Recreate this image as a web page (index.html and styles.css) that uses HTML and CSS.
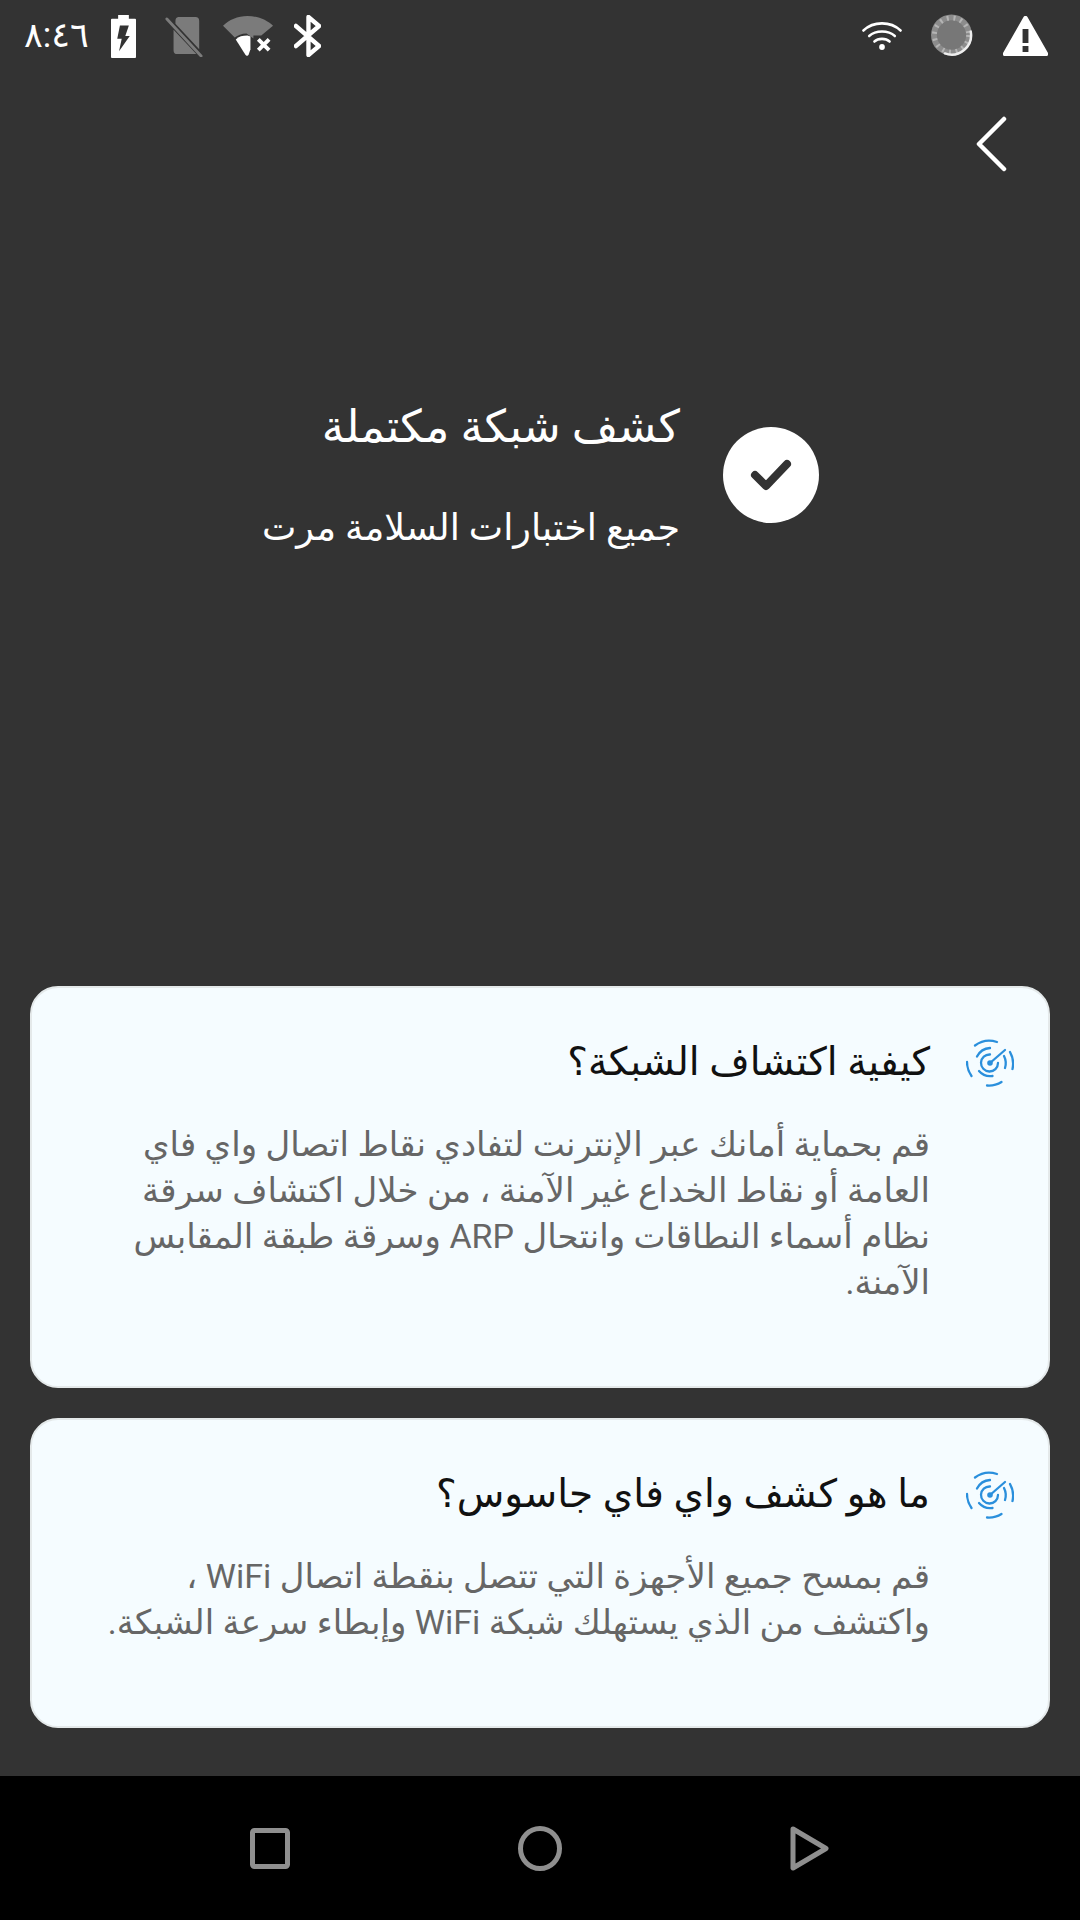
FILE: index.html
```html
<!DOCTYPE html>
<html lang="ar">
<head>
<meta charset="utf-8">
<title>كشف شبكة</title>
<link rel="stylesheet" href="styles.css">
</head>
<body>
<svg width="0" height="0" class="defs">
  <symbol id="radar" viewBox="0 0 48 48">
    <g fill="none" stroke="#2a8fdc" stroke-width="2.300" stroke-linecap="round">
      <path d="M9 6.500 A24 24 0 0 1 31 3"/>
      <path d="M44 13 A24 24 0 0 1 46.500 30"/>
      <path d="M35.500 43 A24 24 0 0 1 21 46.500"/>
      <path d="M5.500 37 A24 24 0 0 1 1 23"/>
      <path d="M11 17.500 A16 16 0 0 1 24 9"/>
      <path d="M38 17 A16 16 0 0 1 39 29"/>
      <path d="M26.500 37 A15 15 0 0 1 13 32"/>
      <path d="M32 24 A8.500 8.500 0 1 1 24 15.500"/>
      <path d="M24 24 L39 11"/>
    </g>
    <circle cx="24" cy="24" r="2.800" fill="#2a8fdc"/>
  </symbol>
</svg>

<div class="screen">
  <div class="statusbar">
    <div class="status-group">
      <span class="clock">٨:٤٦</span>
      <svg class="ic-battery" width="25" height="44" viewBox="0 0 28 46" preserveAspectRatio="none">
        <path fill="#fff" d="M8 1h12v4h7a1 1 0 0 1 1 1v39a1 1 0 0 1-1 1H1a1 1 0 0 1-1-1V6a1 1 0 0 1 1-1h7z"/>
        <path fill="#333" d="M10 12h10l-4 11h5L9 39l3-13H7z"/>
      </svg>
      <svg class="ic-sim" width="38" height="41" viewBox="0 0 40 42" preserveAspectRatio="none">
        <path fill="#7b7b7b" d="M14 1h18a4 4 0 0 1 4 4v29L11 8V5a4 4 0 0 1 3-4zM9 14l24 25H13a4 4 0 0 1-4-4z"/>
        <path stroke="#7b7b7b" stroke-width="3" stroke-linecap="round" d="M2 3l36 38"/>
      </svg>
      <svg class="ic-wifi-off" width="51" height="41" viewBox="0 0 52 42" preserveAspectRatio="none">
        <path fill="#7b7b7b" d="M0 10C6 4 15 0 25 0s20 4 26 10L39 20H31v3L24 18c-5 0-9 2-12 4z"/>
        <path fill="#fff" d="M13 24c3-3 7-4 12-4l3 1v13l-2 6a2 2 0 0 1-3 0z"/>
        <path stroke="#fff" stroke-width="4" d="M36 24l11 11M47 24L36 35"/>
      </svg>
      <svg class="ic-bt" width="27" height="42" viewBox="0 0 28 42" preserveAspectRatio="none">
        <path fill="none" stroke="#fff" stroke-width="4.500" stroke-linecap="round" stroke-linejoin="round" d="M2 11l24 20-11 9V2l11 9L2 31"/>
      </svg>
    </div>
    <div class="status-group status-right">
      <svg class="ic-wifi" width="40" height="30" viewBox="0 0 42 30" preserveAspectRatio="none">
        <g fill="none" stroke="#fff" stroke-width="2.600" stroke-linecap="round">
          <path d="M1.500 9.500C12 0 30 0 40.500 9.500"/>
          <path d="M7.500 15c7-6 20-6 27 0"/>
          <path d="M13 20.500c4-3.500 12-3.500 16 0"/>
        </g>
        <circle cx="21" cy="26" r="3" fill="#fff"/>
      </svg>
      <svg class="ic-spin" width="43" height="44" viewBox="0 0 44 44">
        <circle cx="21" cy="21" r="21" fill="#8c8c8c"/>
        <circle cx="21" cy="21" r="15" fill="#777"/>
        <circle cx="21" cy="21" r="17.500" fill="none" stroke="#b5b5b5" stroke-width="5" stroke-dasharray="2 5"/>
        <path d="M40.700 17.500A20 20 0 0 1 14.200 39.800" fill="none" stroke="#eee" stroke-width="2.500" stroke-linecap="round"/>
      </svg>
      <svg class="ic-warn" width="45" height="40" viewBox="0 0 46 40" preserveAspectRatio="none">
        <path fill="#fff" d="M23 0a2 2 0 0 1 2 1l21 36a2 2 0 0 1-2 3H2a2 2 0 0 1-2-3L21 1a2 2 0 0 1 2-1z"/>
        <path fill="#333" d="M20 13h6v14h-6zM20 30h6v6h-6z"/>
      </svg>
    </div>
  </div>

  <div class="toolbar">
    <svg width="32" height="56" viewBox="0 0 32 56">
      <path fill="none" stroke="#fff" stroke-width="4.500" stroke-linecap="round" stroke-linejoin="round" d="M28 3L3 28l25 25"/>
    </svg>
  </div>

  <div class="hero" dir="rtl">
    <div class="check-circle">
      <svg width="42" height="34" viewBox="0 0 42 34">
        <path fill="none" stroke="#333" stroke-width="8" stroke-linecap="round" stroke-linejoin="round" d="M5 17l11 11L37 6"/>
      </svg>
    </div>
    <div class="hero-text">
      <div class="hero-title">كشف شبكة مكتملة</div>
      <div class="hero-sub">جميع اختبارات السلامة مرت</div>
    </div>
  </div>

  <div class="cards" dir="rtl">
    <div class="card card-tall">
      <svg class="card-icon" width="48" height="48"><use href="#radar"/></svg>
      <div class="card-text">
        <div class="card-title">كيفية اكتشاف الشبكة؟</div>
        <div class="card-body">قم بحماية أمانك عبر الإنترنت لتفادي نقاط اتصال واي فاي العامة أو نقاط الخداع غير الآمنة ، من خلال اكتشاف سرقة نظام أسماء النطاقات وانتحال ARP وسرقة طبقة المقابس الآمنة.</div>
      </div>
    </div>
    <div class="card card-short">
      <svg class="card-icon" width="48" height="48"><use href="#radar"/></svg>
      <div class="card-text">
        <div class="card-title">ما هو كشف واي فاي جاسوس؟</div>
        <div class="card-body">قم بمسح جميع الأجهزة التي تتصل بنقطة اتصال WiFi ، واكتشف من الذي يستهلك شبكة WiFi وإبطاء سرعة الشبكة.</div>
      </div>
    </div>
  </div>

  <div class="navbar">
    <svg width="40" height="41" viewBox="0 0 40 41">
      <rect x="2.500" y="2.500" width="35" height="36" rx="2" fill="none" stroke="#8f8f8f" stroke-width="5"/>
    </svg>
    <svg width="44" height="45" viewBox="0 0 44 45">
      <ellipse cx="22" cy="22.500" rx="19.500" ry="20" fill="none" stroke="#8f8f8f" stroke-width="5"/>
    </svg>
    <svg width="39" height="45" viewBox="0 0 39 45">
      <path d="M3 3l33 19.500L3 42z" fill="none" stroke="#8f8f8f" stroke-width="5" stroke-linejoin="round"/>
    </svg>
  </div>
</div>
</body>
</html>
```

FILE: styles.css
```css
html, body
{
  width: 1080px;
  height: 1920px;
  margin: 0;
  padding: 0;
  overflow: hidden;
  background-color: #333333;
  font-family: Roboto, "Noto Sans", "DejaVu Sans", sans-serif;
}

.defs
{
  display: block;
  height: 0;
}

.screen
{
  width: 1080px;
  height: 1920px;
  display: flex;
  flex-direction: column;
}

.statusbar
{
  height: 72px;
  padding: 0 32px 0 24px;
  display: flex;
  justify-content: space-between;
  align-items: center;
}

.status-group
{
  display: flex;
  align-items: center;
  gap: 20px;
}

.status-right
{
  gap: 29px;
}

.clock
{
  width: 61px;
  color: #ffffff;
  font-size: 35px;
  line-height: 40px;
}

.ic-battery
{
  margin-left: 6px;
}

.ic-sim
{
  margin-left: 9px;
}

.toolbar
{
  height: 72px;
  margin-top: 36px;
  padding: 0 72px 0 0;
  display: flex;
  justify-content: flex-end;
  align-items: center;
}

.hero
{
  height: 806px;
  padding: 0 261px 0 0;
  display: flex;
  align-items: flex-start;
  gap: 43px;
  box-sizing: border-box;
}

.check-circle
{
  width: 96px;
  height: 96px;
  margin-top: 247px;
  flex: none;
  border-radius: 50%;
  background-color: #ffffff;
  display: flex;
  align-items: center;
  justify-content: center;
}

.hero-text
{
  margin-top: 216px;
  color: #ffffff;
}

.hero-title
{
  font-size: 45px;
  line-height: 62px;
}

.hero-sub
{
  margin-top: 44px;
  font-size: 36.500px;
  line-height: 52px;
}

.cards
{
  padding: 0 30px;
  display: flex;
  flex-direction: column;
  gap: 30px;
}

.card
{
  box-sizing: border-box;
  padding: 49px 34px 0 30px;
  display: flex;
  gap: 36px;
  align-items: flex-start;
  background-color: #f5fcff;
  border: 2px solid #e4e9ea;
  border-radius: 28px;
}

.card-tall
{
  height: 402px;
}

.card-short
{
  height: 310px;
}

.card-icon
{
  flex: none;
  margin-top: 2px;
}

.card-text
{
  flex: 1;
  padding-left: 40px;
}

.card-title
{
  color: #111111;
  font-size: 39px;
  line-height: 50px;
}

.card-body
{
  margin-top: 34px;
  color: #666666;
  font-size: 34px;
  line-height: 46px;
}

.navbar
{
  height: 144px;
  margin-top: auto;
  padding: 0 251px 0 250px;
  background-color: #000000;
  display: flex;
  justify-content: space-between;
  align-items: center;
}
```
